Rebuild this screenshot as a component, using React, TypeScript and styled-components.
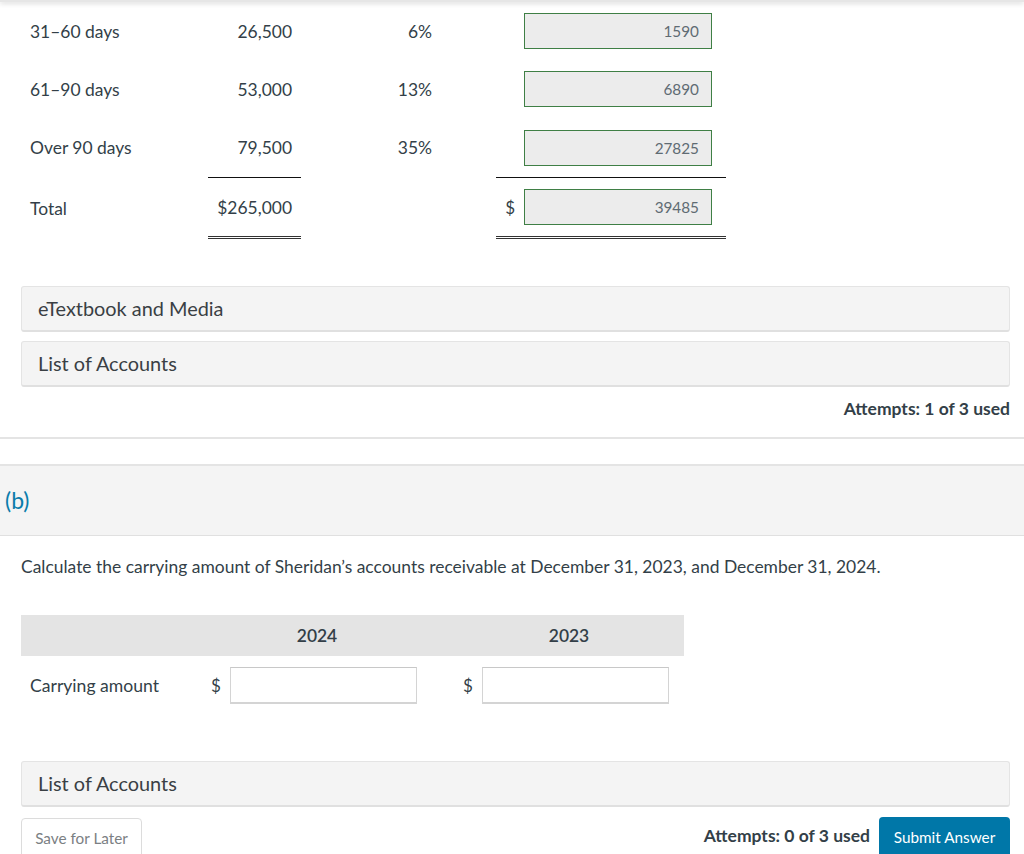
import React from 'react';
import styled, {createGlobalStyle} from 'styled-components';

const GlobalStyle = createGlobalStyle`
  html, body {
    margin: 0;
    height: 854px;
    overflow: hidden;
    background: #ffffff;
    font-family: Lato, "Liberation Sans", sans-serif;
    color: #333f48;
  }
  * { box-sizing: border-box; }
`

const TopBar = styled.div`
  height: 2px;
  background: #e6e6e6;
  box-shadow: 0 1px 5px rgba(0, 0, 0, 0.25);
`

const Section = styled.div`
  padding: 0 14px 0 21px;
`

const AgingTable = styled.div`
  display: grid;
  grid-template-columns: 187px 93px 195px 230px;
  grid-template-rows: 58px 58px 59px 62px;
  margin-bottom: 47px;
`

const Cell = styled.div<{$ruled?: boolean}>`
  display: flex;
  align-items: center;
  font-size: 17.45px;
  border-top: ${p => p.$ruled ? '1px solid #111' : 'none'};
  border-bottom: ${p => p.$ruled ? '3px double #333' : 'none'};
`

const LabelCell = styled(Cell)`
  padding-left: 9px;
`

const AmountCell = styled(Cell)`
  justify-content: flex-end;
  padding-right: 9px;
`

const PercentCell = styled(Cell)`
  justify-content: flex-end;
  padding-right: 64px;
`

const AnswerCell = styled(Cell)`
  padding: 0 14px 0 9px;
  justify-content: flex-end;
`

const Dollar = styled.span`
  margin-right: 9px;
  font-size: 17px;
`

const AnswerBox = styled.div`
  width: 188px;
  height: 36px;
  display: flex;
  align-items: center;
  justify-content: flex-end;
  padding: 0 12px;
  font-size: 15.3px;
  color: #5f6b73;
  background: #ececec;
  border: 1px solid #3f7f45;
`

const AccordionList = styled.div`
  display: flex;
  flex-direction: column;
  gap: 9px;
`

const Accordion = styled.div`
  height: 46px;
  display: flex;
  align-items: center;
  padding: 0 0 1px 16px;
  font-size: 19.9px;
  color: #3a3f44;
  background: #f4f4f4;
  border: 1px solid #e4e4e4;
  border-bottom: 2px solid #e0e0e0;
  border-radius: 3px;
`

const AttemptsRow = styled.div`
  display: flex;
  justify-content: flex-end;
  margin-top: 12px;
  height: 20px;
  line-height: 20px;
  font-size: 17.5px;
  font-weight: 700;
`

const Divider = styled.div`
  height: 2px;
  margin-top: 18px;
  background: #e4e4e4;
`

const PartBand = styled.div`
  height: 72px;
  margin-top: 25px;
  display: flex;
  align-items: flex-end;
  padding: 0 0 21px 5px;
  font-size: 23px;
  color: #0a7cab;
  background: #f4f4f4;
  border-top: 2px solid #e4e4e4;
  border-bottom: 1px solid #e0e0e0;
`

const Question = styled.p`
  margin: 20px 0 0;
  line-height: 21px;
  font-size: 17.45px;
`

const CarryingTable = styled.div`
  width: 663px;
  margin-top: 38px;
`

const HeaderRow = styled.div`
  display: grid;
  grid-template-columns: 170px 252px 252px;
  height: 41px;
  align-items: center;
  background: #e4e4e4;
  font-size: 17.45px;
  font-weight: 600;
`

const HeaderCell = styled.div`
  text-align: center;
`

const InputRow = styled.div`
  display: grid;
  grid-template-columns: 179px 252px 232px;
  align-items: center;
  height: 59px;
`

const InputLabel = styled.div`
  padding-left: 9px;
  font-size: 17.6px;
`

const DollarInput = styled.div`
  display: flex;
  align-items: center;
  padding-left: 11px;
`

const TextInput = styled.input`
  width: 187px;
  height: 37px;
  background: #ffffff;
  border: 1px solid #d4d4d4;
  border-top-color: #c8c8c8;
  border-bottom-width: 2px;
`

const SingleAccordion = styled(Accordion)`
  margin-top: 46px;
`

const Footer = styled.div`
  display: flex;
  align-items: flex-start;
  justify-content: space-between;
  margin-top: 11px;
`

const SaveButton = styled.button`
  width: 121px;
  height: 48px;
  padding: 0 0 8px;
  font: 15.3px Lato, sans-serif;
  color: #7b7f83;
  background: #ffffff;
  border: 1px solid #dcdcdc;
  border-radius: 4px;
`

const SubmitGroup = styled.div`
  display: flex;
  align-items: flex-start;
  gap: 9px;
`

const FooterAttempts = styled.span`
  margin-top: 8px;
  line-height: 20px;
  font-size: 17.5px;
  font-weight: 700;
`

const SubmitButton = styled.button`
  width: 131px;
  height: 48px;
  padding: 0 0 8px;
  margin-top: -1px;
  font: 15.3px Lato, sans-serif;
  color: #ffffff;
  background: #0077a8;
  border: none;
  border-radius: 4px;
`

const rows = [
    {label: '31–60 days', amount: '26,500', percent: '6%', value: '1590'},
    {label: '61–90 days', amount: '53,000', percent: '13%', value: '6890'},
    {label: 'Over 90 days', amount: '79,500', percent: '35%', value: '27825'},
]

function App() {
    return (
        <>
            <GlobalStyle/>
            <TopBar/>
            <Section>
                <AgingTable>
                    {rows.map(row => (
                        <React.Fragment key={row.label}>
                            <LabelCell>{row.label}</LabelCell>
                            <AmountCell>{row.amount}</AmountCell>
                            <PercentCell>{row.percent}</PercentCell>
                            <AnswerCell><AnswerBox>{row.value}</AnswerBox></AnswerCell>
                        </React.Fragment>
                    ))}
                    <LabelCell>Total</LabelCell>
                    <AmountCell $ruled>$265,000</AmountCell>
                    <PercentCell/>
                    <AnswerCell $ruled>
                        <Dollar>$</Dollar>
                        <AnswerBox>39485</AnswerBox>
                    </AnswerCell>
                </AgingTable>
            </Section>
            <Section>
                <AccordionList>
                    <Accordion>eTextbook and Media</Accordion>
                    <Accordion>List of Accounts</Accordion>
                </AccordionList>
                <AttemptsRow>Attempts: 1 of 3 used</AttemptsRow>
            </Section>
            <Divider/>
            <PartBand>(b)</PartBand>
            <Section>
                <Question>Calculate the carrying amount of Sheridan’s accounts receivable at December 31, 2023, and December 31, 2024.</Question>
                <CarryingTable>
                    <HeaderRow>
                        <div/>
                        <HeaderCell>2024</HeaderCell>
                        <HeaderCell>2023</HeaderCell>
                    </HeaderRow>
                    <InputRow>
                        <InputLabel>Carrying amount</InputLabel>
                        <DollarInput><Dollar>$</Dollar><TextInput/></DollarInput>
                        <DollarInput><Dollar>$</Dollar><TextInput/></DollarInput>
                    </InputRow>
                </CarryingTable>
                <SingleAccordion>List of Accounts</SingleAccordion>
                <Footer>
                    <SaveButton>Save for Later</SaveButton>
                    <SubmitGroup>
                        <FooterAttempts>Attempts: 0 of 3 used</FooterAttempts>
                        <SubmitButton>Submit Answer</SubmitButton>
                    </SubmitGroup>
                </Footer>
            </Section>
        </>
    );
}

export default App;
